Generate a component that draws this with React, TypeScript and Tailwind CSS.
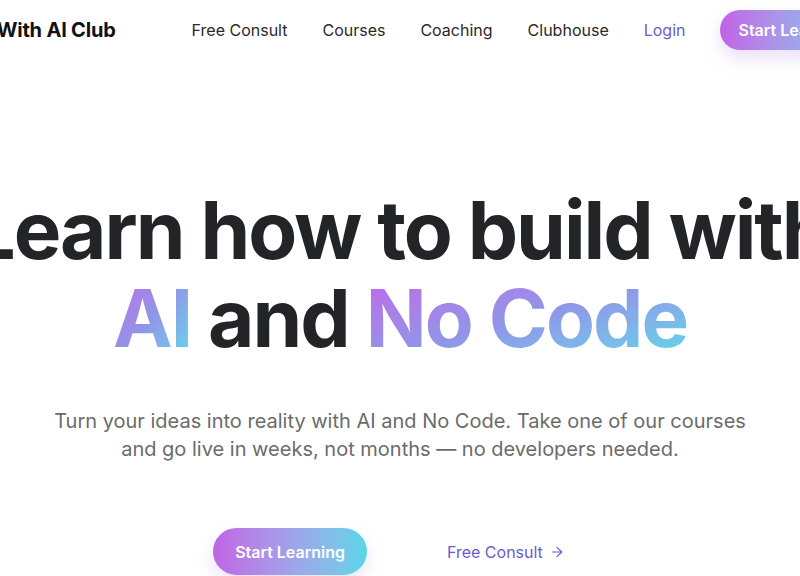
import { ArrowRight } from "lucide-react";

const links = ["Free Consult", "Courses", "Coaching", "Clubhouse"];

const gradient =
  "bg-gradient-to-br from-[#c062e8] via-[#8f96e8] to-[#4fdcea] bg-clip-text text-transparent";

const Nav = () => {
  return (
    <header className="flex justify-center h-[60px] items-center">
      <div className="flex items-center shrink-0 w-[950px] pl-[19px]">
        <span className="text-[20px] font-bold text-[#111] tracking-[-0.2px] whitespace-nowrap">
          Build With AI Club
        </span>
        <nav className="flex items-center gap-[35px] ml-[76px]">
          {links.map((l) => (
            <a key={l} className="text-[16px] text-[#2a2a2a] whitespace-nowrap">
              {l}
            </a>
          ))}
          <a className="text-[16px] text-[#6a5ccf]">Login</a>
          <button className="h-[40px] px-[18px] rounded-full bg-gradient-to-r from-[#c063e6] to-[#55d6ea] text-white text-[16px] font-semibold whitespace-nowrap shadow-[0_8px_18px_rgba(160,110,230,0.22)]">
            Start Learning
          </button>
        </nav>
      </div>
    </header>
  );
};

export default function App() {
  return (
    <div
      className="w-[800px] h-[576px] overflow-hidden bg-white"
      style={{ fontFamily: "Inter, 'Noto Sans', sans-serif" }}
    >
      <Nav />
      <main className="flex flex-col items-center pt-[126px]">
        <div className="flex justify-center w-full">
          <h1 className="shrink-0 text-center text-[80px] leading-[88px] font-bold tracking-[-2px] text-[#232427] whitespace-nowrap">
            Learn how to build with
            <br />
            <span className={gradient}>AI</span> and{" "}
            <span className={gradient}>No Code</span>
          </h1>
        </div>
        <p className="mt-[45px] w-[720px] text-center text-[20px] leading-[28px] text-[#6b6b6b]">
          Turn your ideas into reality with AI and No Code. Take one of our courses and go live in weeks, not
          months — no developers needed.
        </p>
        <div className="flex items-center gap-[80px] mt-[65px]">
          <button className="h-[47px] px-[22px] rounded-full bg-gradient-to-r from-[#c063e6] to-[#55d6ea] text-white text-[16px] font-semibold shadow-[0_8px_18px_rgba(160,110,230,0.2)]">
            Start Learning
          </button>
          <a className="flex items-center gap-[6px] pr-[22px] text-[16px] text-[#6a5ccf]">
            Free Consult <ArrowRight size={16} strokeWidth={1.8} />
          </a>
        </div>
      </main>
    </div>
  );
}
